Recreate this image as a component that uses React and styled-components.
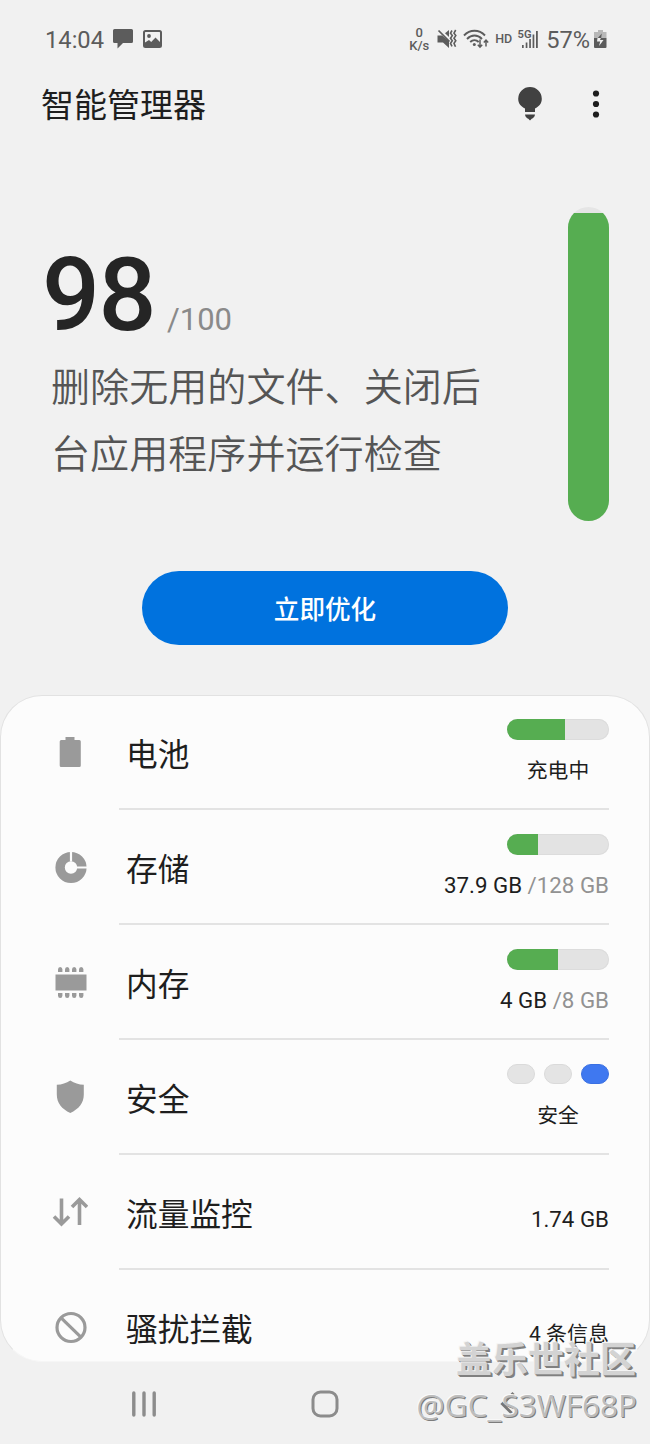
import React from "react";
import styled, { createGlobalStyle } from "styled-components";

const GREEN = "#56ad51";
const BLUE = "#3f78f0";

const GlobalStyle = createGlobalStyle`
    * {
        box-sizing: border-box;
    }
    body {
        margin: 0;
        background: #f1f1f1;
        font-family: Roboto, "Noto Sans CJK SC", sans-serif;
        color: #1e1e1e;
    }
`;

const ChatIcon = () => (
    <svg width="20" height="20" viewBox="0 0 20 20">
        <path
            d="M1.5 0h17A1.5 1.5 0 0 1 20 1.500v11a1.500 1.500 0 0 1-1.500 1.500H10l-5.500 5.500V14h-3A1.500 1.500 0 0 1 0 12.500v-11A1.500 1.500 0 0 1 1.500 0z"
            fill="#5c5c5c"
        />
    </svg>
);

const PictureIcon = () => (
    <svg width="19" height="18" viewBox="0 0 19 18">
        <rect x="1" y="1" width="17" height="16" rx="1.500" fill="none" stroke="#5c5c5c" strokeWidth="2" />
        <circle cx="6" cy="6" r="1.900" fill="#5c5c5c" />
        <path d="M2 12.500l4-2.500 2.200 2 4.300-4.500L17 12v4.500H2z" fill="#5c5c5c" />
    </svg>
);

const MuteIcon = () => (
    <svg width="20" height="20" viewBox="0 0 20 20" fill="#5c5c5c">
        <path d="M0.500 6.500H5L12 12v7L6 13.500H0.500z" />
        <path d="M8 4.200L12 1v7z" />
        <path d="M1.500 1.500L12.500 12.500" stroke="#5c5c5c" strokeWidth="1.700" />
        <path
            d="M15 1.500l-1.500 2.600 1.800 2.500-1.800 2.600 1.800 2.600-1.800 2.600 1.500 2.900M18.700 1l-1.700 3.100 1.800 2.500L17 9.200l1.800 2.600-1.800 2.600 1.500 3.400"
            fill="none"
            stroke="#5c5c5c"
            strokeWidth="1.600"
        />
    </svg>
);

const WifiIcon = () => (
    <svg width="26" height="20" viewBox="0 0 26 20" fill="none" stroke="#5c5c5c" strokeWidth="1.900">
        <path d="M1 6.500C7 .2 16 .2 22 6.500M4 10c4.500-4.600 10.500-4.600 15 0M7.200 13c2.500-2.500 6-2.500 8.500 0" />
        <circle cx="11.300" cy="15.500" r="1.500" fill="#5c5c5c" stroke="none" />
        <path d="M17 10.500v7.500M14.800 15.800l2.200 2.400 2.200-2.400M23 17.500v-6M20.800 13.500l2.200-2.400 2.200 2.400" strokeWidth="1.500" />
    </svg>
);

const SignalIcon = () => (
    <svg width="22" height="20" viewBox="0 0 22 20" fill="#5c5c5c" overflow="visible">
        <text x="0.500" y="9" fontSize="11.500" fontWeight="600" textLength="14" lengthAdjust="spacingAndGlyphs">
            5G
        </text>
        <path d="M5 16h1.700v3H5zM8.700 13.500h1.700V19H8.700zM12.200 10h1.700v9h-1.700zM15.600 5.500h1.700V19h-1.700zM19 2h1.800v17H19z" />
    </svg>
);

const ChargingIcon = () => (
    <svg width="13" height="20" viewBox="0 0 13 20">
        <path d="M4 1h5v2h3.500v6H0V3h4z" fill="#b8b8b8" />
        <path d="M0 9h12.500v9a1 1 0 0 1-1 1H1a1 1 0 0 1-1-1z" fill="#5c5c5c" />
        <path d="M7.800 4.500L3.800 9H7.200z" fill="#5c5c5c" />
        <path d="M3.500 9h3.400L6 11h3.500L5 17l1.200-4.500H3z" fill="#f1f1f1" />
    </svg>
);

const BulbIcon = () => (
    <svg width="24" height="35" viewBox="0 0 24 35" fill="#414141">
        <path d="M12 0a11.800 11.800 0 0 1 11.800 11.800c0 4.700-2.800 7.800-6.800 9.800v3.400H7v-3.400C3 19.600.2 16.500.2 11.800A11.800 11.800 0 0 1 12 0z" />
        <path d="M7 27.500h10c-.3 2.500-1.800 3.600-3.300 4.200L12 33.500l-1.700-1.800C8.800 31.100 7.300 30 7 27.500z" />
    </svg>
);

const DotsIcon = () => (
    <svg width="8" height="28" viewBox="0 0 8 28" fill="#1e1e1e">
        <circle cx="4" cy="3.500" r="3.100" />
        <circle cx="4" cy="14" r="3.100" />
        <circle cx="4" cy="24.500" r="3.100" />
    </svg>
);

const BatteryIcon = () => (
    <svg width="36" height="36" viewBox="0 0.500 36 36" fill="#9a9a9a">
        <path d="M13.500 3.500h9v3h4.800a1.500 1.500 0 0 1 1.500 1.500v24a1.500 1.500 0 0 1-1.500 1.500h-18A1.500 1.500 0 0 1 7.700 32V8a1.500 1.500 0 0 1 1.500-1.500h4.300z" />
    </svg>
);

const StorageIcon = () => (
    <svg width="36" height="36" viewBox="0 0 36 36">
        <circle cx="19" cy="18.500" r="10.900" fill="none" stroke="#9a9a9a" strokeWidth="9.400" />
        <path d="M19 0v12.500M24 18.500h12" stroke="#fcfcfc" strokeWidth="2.200" />
    </svg>
);

const MemoryIcon = () => (
    <svg width="36" height="36" viewBox="0 0 36 36" fill="#9a9a9a">
        <rect x="3.500" y="10.500" width="31" height="16" />
        {[6, 13, 20, 27].map(x => (
            <React.Fragment key={x}>
                <path d={`M${x} 8V5.500q0-2.500 2.200-2.500t2.200 2.500V8z`} />
                <path d={`M${x} 29v2.500q0 2.500 2.200 2.500t2.200-2.500v-2.500z`} />
            </React.Fragment>
        ))}
    </svg>
);

const ShieldIcon = () => (
    <svg width="36" height="36" viewBox="-0.300 1 36 36" fill="#9a9a9a">
        <path d="M18 2.500c4 2.800 8.500 4 13.500 4.300V16.500c0 8.500-5 14.500-13.500 18.500C9.500 31 4.500 25 4.500 16.500V6.800C9.500 6.500 14 5.300 18 2.500z" />
    </svg>
);

const DataIcon = () => (
    <svg width="36" height="36" viewBox="0 0 36 36" fill="none" stroke="#9a9a9a" strokeWidth="3.600">
        <path d="M9.500 4.500V30M2 22.500l7.500 7.500 7.500-7.500M27.500 31V6M20 13l7.500-7.500L35 13" />
    </svg>
);

const BlockIcon = () => (
    <svg width="36" height="36" viewBox="0 0 36 36" fill="none" stroke="#9a9a9a" strokeWidth="3.200">
        <circle cx="19" cy="18.500" r="14" />
        <path d="M9.100 8.800l19.800 19.400" />
    </svg>
);

const items = [
    { name: "电池", icon: BatteryIcon, percent: 57, status: "充电中" },
    { name: "存储", icon: StorageIcon, percent: 30.5, value: "37.9 GB ", total: "/128 GB" },
    { name: "内存", icon: MemoryIcon, percent: 50, value: "4 GB ", total: "/8 GB" },
    { name: "安全", icon: ShieldIcon, pills: [false, false, true], status: "安全" },
    { name: "流量监控", icon: DataIcon, value: "1.74 GB" },
    { name: "骚扰拦截", icon: BlockIcon, value: "4 条信息", small: true }
];

function Item({ item }) {
    const Icon = item.icon;
    const plain = !item.percent && !item.pills;
    return (
        <Row>
            <IconBox>
                <Icon />
            </IconBox>
            <RowBody>
                <Label>{item.name}</Label>
                <Detail $plain={plain}>
                    {item.percent && (
                        <Bar>
                            <BarFill style={{ width: `${item.percent}%` }} />
                        </Bar>
                    )}
                    {item.pills && (
                        <Pills>
                            {item.pills.map((on, i) => (
                                <Pill key={i} $on={on} />
                            ))}
                        </Pills>
                    )}
                    {item.status && <Status>{item.status}</Status>}
                    {item.value && (
                        <Value $small={item.small}>
                            {item.value}
                            <Total>{item.total}</Total>
                        </Value>
                    )}
                </Detail>
            </RowBody>
        </Row>
    );
}

export default function App() {
    return (
        <Screen>
            <GlobalStyle />
            <StatusBar>
                <Clock>14:04</Clock>
                <ChatIcon />
                <PictureIcon />
                <StatusRight>
                    <Speed>
                        <span>0</span>
                        <span>K/s</span>
                    </Speed>
                    <MuteIcon />
                    <WifiIcon />
                    <Hd>HD</Hd>
                    <SignalIcon />
                    <Percent>57%</Percent>
                    <ChargingIcon />
                </StatusRight>
            </StatusBar>
            <Header>
                <Title>智能管理器</Title>
                <BulbIcon />
                <DotsIcon />
            </Header>
            <Hero>
                <HeroText>
                    <Score>
                        98<Max>/100</Max>
                    </Score>
                    <Description>
                        删除无用的文件、关闭后
                        <br />
                        台应用程序并运行检查
                    </Description>
                </HeroText>
                <Gauge>
                    <GaugeFill style={{ height: "98%" }} />
                </Gauge>
            </Hero>
            <OptimizeButton>立即优化</OptimizeButton>
            <Card>
                {items.map(item => (
                    <Item key={item.name} item={item} />
                ))}
            </Card>
            <NavBar>
                <svg width="26" height="26" viewBox="0 0 26 26" stroke="#8c8c8c" strokeWidth="3.400" strokeLinecap="round">
                    <path d="M2.800 2v22M13 2v22M23.200 2v22" />
                </svg>
                <svg width="28" height="28" viewBox="0 0 28 28" fill="none" stroke="#8c8c8c" strokeWidth="3">
                    <rect x="2" y="2" width="24" height="24" rx="7.500" />
                </svg>
                <svg width="16" height="26" viewBox="0 0 16 26" fill="none" stroke="#777" strokeWidth="3">
                    <path d="M13.500 2L2.500 13l11 11" />
                </svg>
            </NavBar>
            <Watermark>
                <WatermarkName>盖乐世社区</WatermarkName>
                <WatermarkUser>@GC_S3WF68P</WatermarkUser>
            </Watermark>
        </Screen>
    );
}

const Screen = styled.div`
    position: relative;
    display: flex;
    flex-direction: column;
    width: 650px;
    height: 1444px;
    overflow: hidden;
    background: #f1f1f1;
`;

const StatusBar = styled.div`
    display: flex;
    align-items: center;
    height: 78px;
    padding: 0 43px 0 45px;
    color: #5c5c5c;
    svg {
        flex: none;
    }
    svg + svg {
        margin-left: 10px;
    }
`;

const Clock = styled.span`
    width: 68px;
    padding-top: 2px;
    font-size: 23.7px;
    line-height: 28px;
`;

const StatusRight = styled.div`
    display: flex;
    align-items: center;
    margin-left: auto;
    && svg {
        margin-left: 6px;
    }
`;

const Speed = styled.div`
    display: flex;
    flex-direction: column;
    align-items: center;
    padding-right: 2px;
    font-size: 13px;
    line-height: 13px;
    font-weight: 500;
`;

const Hd = styled.span`
    margin: 0 -1px 0 6px;
    font-size: 12.5px;
    line-height: 14px;
    font-weight: 500;
`;

const Percent = styled.span`
    margin: 0 -2px 0 7px;
    padding-top: 2px;
    font-size: 23.6px;
    line-height: 28px;
`;

const Header = styled.header`
    display: flex;
    align-items: center;
    height: 52px;
    padding: 0 50px 0 41px;
    svg:last-child {
        margin-left: 50px;
    }
`;

const Title = styled.h1`
    margin: 0 auto 0 0;
    padding-top: 4px;
    font-size: 33px;
    line-height: 48px;
    font-weight: 400;
`;

const Hero = styled.section`
    display: flex;
    justify-content: space-between;
    height: 441px;
    padding: 77px 41px 0 42px;
`;

const HeroText = styled.div`
    padding-top: 37px;
`;

const Score = styled.div`
    display: flex;
    align-items: baseline;
    height: 111px;
    color: #252525;
    font-size: 102px;
    line-height: 102px;
    font-weight: 500;
    letter-spacing: -1.5px;
`;

const Max = styled.span`
    margin-left: 12px;
    color: #8a8a8a;
    font-size: 31px;
    line-height: 31px;
    font-weight: 400;
    letter-spacing: 0;
`;

const Description = styled.p`
    margin: 0;
    padding-left: 9px;
    color: #555;
    font-size: 39.1px;
    line-height: 67px;
    font-weight: 350;
    white-space: nowrap;
`;

const Gauge = styled.div`
    display: flex;
    align-items: flex-end;
    width: 41px;
    height: 314px;
    border-radius: 21px;
    overflow: hidden;
    background: #e5e5e5;
`;

const GaugeFill = styled.div`
    width: 100%;
    background: ${GREEN};
`;

const OptimizeButton = styled.button`
    align-self: center;
    width: 366px;
    height: 74px;
    padding: 0 0 2px;
    border: 0;
    border-radius: 37px;
    background: #0072de;
    color: #fff;
    font-family: inherit;
    font-size: 25.6px;
    font-weight: 500;
`;

const Card = styled.main`
    height: 667px;
    margin-top: 50px;
    border: 1px solid #e2e2e2;
    border-bottom-color: #f6f6f6;
    border-radius: 42px;
    overflow: hidden;
    background: #fcfcfc;
`;

const Row = styled.div`
    display: flex;
    height: 115px;
    padding: 0 40px 0 51px;
    &:first-child {
        margin-top: -1px;
    }
`;

const IconBox = styled.div`
    display: flex;
    align-items: center;
    width: 67px;
    padding-bottom: 1px;
`;

const RowBody = styled.div`
    display: flex;
    flex: 1;
    justify-content: space-between;
    padding-left: 7px;
    border-bottom: 2px solid #e3e3e3;
`;

const Label = styled.span`
    font-size: 31.7px;
    line-height: 121px;
`;

const Detail = styled.div`
    display: flex;
    flex-direction: column;
    align-items: flex-end;
    justify-content: flex-end;
    padding-bottom: ${props => (props.$plain ? "33px" : "22px")};
`;

const Bar = styled.div`
    width: 102px;
    height: 21px;
    margin-bottom: 16px;
    border-radius: 11px;
    overflow: hidden;
    background: #e3e3e3;
    box-shadow: inset 0 0 0 1px #dcdcdc;
`;

const BarFill = styled.div`
    height: 100%;
    background: ${GREEN};
`;

const Pills = styled.div`
    display: flex;
    justify-content: space-between;
    width: 102px;
    height: 21px;
    margin-bottom: 16px;
`;

const Pill = styled.span`
    width: 28px;
    height: 20px;
    border: 1px solid ${props => (props.$on ? "#3a70e2" : "#dadada")};
    border-radius: 10px;
    background: ${props => (props.$on ? BLUE : "#e4e4e4")};
`;

const Status = styled.span`
    width: 102px;
    font-size: 20.8px;
    line-height: 30px;
    text-align: center;
`;

const Value = styled.span`
    height: 30px;
    font-size: ${props => (props.$small ? "21px" : "22.3px")};
    line-height: 28px;
    white-space: pre;
`;

const Total = styled.span`
    color: #929292;
`;

const NavBar = styled.nav`
    display: flex;
    align-items: center;
    height: 82px;
    padding: 2px 0 0 131px;
    svg:nth-child(2) {
        margin-left: 154px;
    }
    svg:nth-child(3) {
        margin-left: 161px;
    }
`;

const Watermark = styled.div`
    position: absolute;
    right: 13px;
    bottom: 16px;
    display: flex;
    flex-direction: column;
    align-items: flex-end;
    white-space: nowrap;
`;

const WatermarkName = styled.span`
    height: 44px;
    padding-right: 1px;
    color: #d3d3d3;
    font-size: 36px;
    line-height: 46px;
    font-weight: 700;
    text-shadow: -1px -1px 0 #f4f4f4, 1px 1px 0 #808080, 2px 2px 0 #808080;
`;

const WatermarkUser = styled.span`
    color: #bcbcbc;
    font-family: "Open Sans", sans-serif;
    font-size: 31.5px;
    line-height: 46px;
    text-shadow: -1px -1px 0 #fafafa, 1px 1px 0 #7c7c7c;
`;
